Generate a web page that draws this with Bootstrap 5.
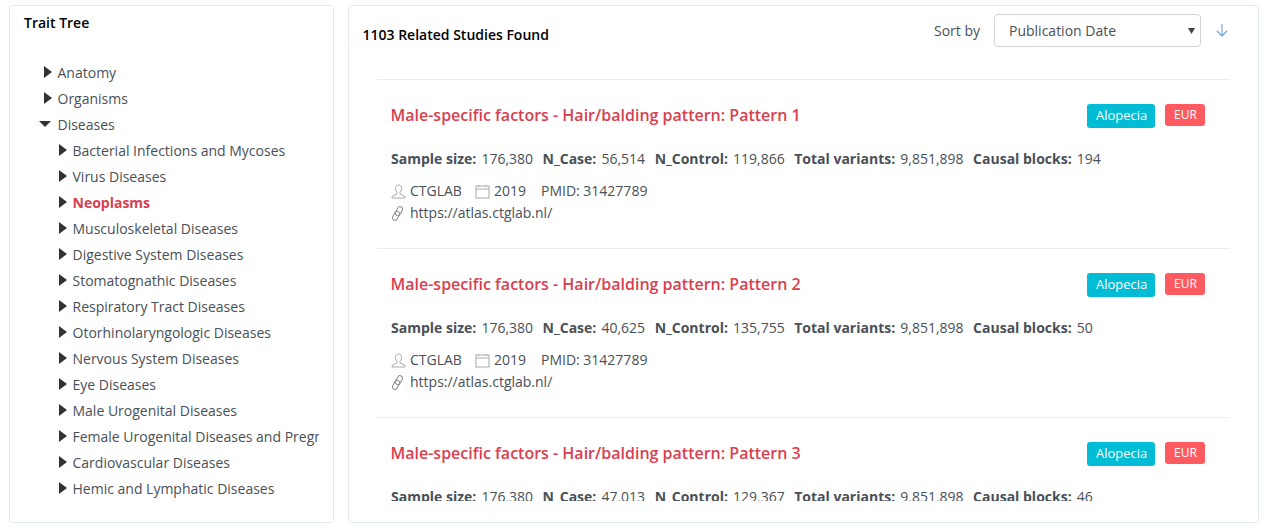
<!DOCTYPE html>
<html lang="en"><head><meta charset="utf-8"><title>Trait Tree</title>
<link rel="stylesheet" href="https://cdn.jsdelivr.net/npm/bootstrap@5.3.0/dist/css/bootstrap.min.css">
<style>
html,body{height:529px;overflow:hidden}
body{font-family:"Open Sans",sans-serif;font-size:14px;color:#495057;background:#fff}
.shell{height:529px;padding:5px 7px 6px 9px;gap:14px}
.panel{border:1px solid #e3ebeb;border-radius:4px;background:#fff;min-width:0}
.side{width:325px;flex:none;padding:7px 14px 0 14px;overflow:hidden}
.side-title{font-size:14px;font-weight:600;color:#000;line-height:19px;margin:0 0 27px}
.tree{list-style:none;margin:0;padding:0 0 0 18.5px;white-space:nowrap;overflow:hidden}
.tree ul{list-style:none;margin:0;padding:0 0 0 15px}
.tree li>span{display:flex;align-items:center;height:26px;gap:5px}
.tw{width:10px;flex:none;display:block;color:#333}
.tw-open{width:12px;margin-left:-4px;margin-right:2px}
.hot{color:#d9404f;font-weight:700}
.main{flex:1;overflow:hidden;padding:0 28px 0 28px;display:flex;flex-direction:column}
.head{height:73px;flex:none;margin-left:-14px;padding-top:8px}
.found{font-size:14px;font-weight:600;color:#000;margin:0;padding-top:10px;margin-left:-.5px}
.sortl{margin-right:14px}
.sorter{width:207px;height:33px;font-size:14px;padding:0 14px;color:#495057;border-color:#ced4da;border-radius:4px;font-family:inherit;background-image:url("data:image/svg+xml,%3Csvg xmlns='http://www.w3.org/2000/svg' width='8' height='6'%3E%3Cpath d='M0 0H8L4 6Z' fill='%23444'/%3E%3C/svg%3E");background-size:7px 6px;background-position:right 5px center;background-repeat:no-repeat}
.arrow{margin-left:14px;margin-right:1px;margin-top:-2px}
.results{height:422px;overflow:hidden;flex:none}
.item{border-top:1px solid #e9eded;height:169px;padding:24px 14px 0 14px}
.title{font-size:16px;font-weight:600;color:#d9404f;margin:0;line-height:22px;margin-left:-.5px}
.tag{color:#fff;border-radius:3px;font-weight:400}
.tag-a{background:#00bcd4;height:24px;padding:3px 9px;font-size:13px;line-height:16px;width:68px;text-align:center}
.tag-b{background:#ff5a5f;height:22px;padding:3px 9px;font-size:12px;line-height:16px;width:40px;text-align:center}
.tags{gap:10px;padding-right:11px;align-items:flex-start}
.stats{margin-top:21px;line-height:20px;gap:9.5px}
.stats b{font-weight:700;margin-right:1.5px}
.meta{margin-top:11px;line-height:22px}
.meta svg{flex:none;margin-right:4px}
.ic-cal{margin-left:5px}
.ic-gap{margin-right:15px}
</style></head><body>
<div class="shell d-flex">
<aside class="panel side">
<p class="side-title">Trait Tree</p>
<ul class="tree">
<li><span><svg class="tw" viewBox="0 0 10 12" width="10" height="12"><path d="M1 0L9 6L1 12Z" fill="currentColor"/></svg>Anatomy</span></li>
<li><span><svg class="tw" viewBox="0 0 10 12" width="10" height="12"><path d="M1 0L9 6L1 12Z" fill="currentColor"/></svg>Organisms</span></li>
<li><span><svg class="tw tw-open" viewBox="0 0 12 10" width="12" height="10"><path d="M0 2H12L6 8Z" fill="currentColor"/></svg>Diseases</span>
<ul>
<li><span><svg class="tw" viewBox="0 0 10 12" width="10" height="12"><path d="M1 0L9 6L1 12Z" fill="currentColor"/></svg>Bacterial Infections and Mycoses</span></li>
<li><span><svg class="tw" viewBox="0 0 10 12" width="10" height="12"><path d="M1 0L9 6L1 12Z" fill="currentColor"/></svg>Virus Diseases</span></li>
<li><span><svg class="tw" viewBox="0 0 10 12" width="10" height="12"><path d="M1 0L9 6L1 12Z" fill="currentColor"/></svg><span class="hot">Neoplasms</span></span></li>
<li><span><svg class="tw" viewBox="0 0 10 12" width="10" height="12"><path d="M1 0L9 6L1 12Z" fill="currentColor"/></svg>Musculoskeletal Diseases</span></li>
<li><span><svg class="tw" viewBox="0 0 10 12" width="10" height="12"><path d="M1 0L9 6L1 12Z" fill="currentColor"/></svg>Digestive System Diseases</span></li>
<li><span><svg class="tw" viewBox="0 0 10 12" width="10" height="12"><path d="M1 0L9 6L1 12Z" fill="currentColor"/></svg>Stomatognathic Diseases</span></li>
<li><span><svg class="tw" viewBox="0 0 10 12" width="10" height="12"><path d="M1 0L9 6L1 12Z" fill="currentColor"/></svg>Respiratory Tract Diseases</span></li>
<li><span><svg class="tw" viewBox="0 0 10 12" width="10" height="12"><path d="M1 0L9 6L1 12Z" fill="currentColor"/></svg>Otorhinolaryngologic Diseases</span></li>
<li><span><svg class="tw" viewBox="0 0 10 12" width="10" height="12"><path d="M1 0L9 6L1 12Z" fill="currentColor"/></svg>Nervous System Diseases</span></li>
<li><span><svg class="tw" viewBox="0 0 10 12" width="10" height="12"><path d="M1 0L9 6L1 12Z" fill="currentColor"/></svg>Eye Diseases</span></li>
<li><span><svg class="tw" viewBox="0 0 10 12" width="10" height="12"><path d="M1 0L9 6L1 12Z" fill="currentColor"/></svg>Male Urogenital Diseases</span></li>
<li><span><svg class="tw" viewBox="0 0 10 12" width="10" height="12"><path d="M1 0L9 6L1 12Z" fill="currentColor"/></svg>Female Urogenital Diseases and Pregnancy Complications</span></li>
<li><span><svg class="tw" viewBox="0 0 10 12" width="10" height="12"><path d="M1 0L9 6L1 12Z" fill="currentColor"/></svg>Cardiovascular Diseases</span></li>
<li><span><svg class="tw" viewBox="0 0 10 12" width="10" height="12"><path d="M1 0L9 6L1 12Z" fill="currentColor"/></svg>Hemic and Lymphatic Diseases</span></li>
</ul></li>
</ul>
</aside>
<main class="panel main">
<div class="head d-flex justify-content-between align-items-start">
<p class="found">1103 Related Studies Found</p>
<div class="d-flex align-items-center">
<span class="sortl">Sort by</span>
<select class="form-select sorter" aria-label="Sort by"><option>Publication Date</option></select>
<svg class="arrow" width="14" height="14" viewBox="0 0 14 14" fill="none" stroke="#6a9fdc" stroke-width="1.1"><path d="M7 1V13M2 8L7 13L12 8"/></svg>
</div>
</div>
<div class="results">
<article class="item">
<div class="d-flex justify-content-between"><h2 class="title">Male-specific factors - Hair/balding pattern: Pattern 1</h2><div class="d-flex tags"><span class="tag tag-a">Alopecia</span><span class="tag tag-b">EUR</span></div></div>
<div class="d-flex stats"><span><b>Sample size:</b> 176,380</span><span><b>N_Case:</b> 56,514</span><span><b>N_Control:</b> 119,866</span><span><b>Total variants:</b> 9,851,898</span><span><b>Causal blocks:</b> 194</span></div>
<div class="meta"><div class="d-flex align-items-center"><svg width="15" height="15" viewBox="0 0 15 15" fill="none" stroke="#a9a9a9"><path d="M7.5 1C5.5 1 4.5 2.5 4.5 4.5C4.5 6.5 5.5 8 6 8.5V10L1 12.5V14H14V12.5L9 10V8.5C9.5 8 10.5 6.5 10.5 4.5C10.5 2.5 9.5 1 7.5 1Z"/></svg><span class="me-2">CTGLAB</span><svg class="ic-cal" width="15" height="15" viewBox="0 0 15 15" fill="none" stroke="#a9a9a9"><rect x="1" y="2" width="13" height="12"/><path d="M1 5H14M4 1V3M11 1V3"/></svg><span class="ic-gap">2019</span><span>PMID: 31427789</span></div>
<div class="d-flex align-items-center"><svg width="15" height="15" viewBox="0 0 15 15" fill="none" stroke="#8a8a8a"><g transform="rotate(-62 6.5 7.5)"><rect x="-1" y="4.8" width="9.5" height="5" rx="2.5"/><rect x="4.5" y="5.2" width="9.5" height="5" rx="2.5"/></g></svg><span>https://atlas.ctglab.nl/</span></div></div>
</article>
<article class="item">
<div class="d-flex justify-content-between"><h2 class="title">Male-specific factors - Hair/balding pattern: Pattern 2</h2><div class="d-flex tags"><span class="tag tag-a">Alopecia</span><span class="tag tag-b">EUR</span></div></div>
<div class="d-flex stats"><span><b>Sample size:</b> 176,380</span><span><b>N_Case:</b> 40,625</span><span><b>N_Control:</b> 135,755</span><span><b>Total variants:</b> 9,851,898</span><span><b>Causal blocks:</b> 50</span></div>
<div class="meta"><div class="d-flex align-items-center"><svg width="15" height="15" viewBox="0 0 15 15" fill="none" stroke="#a9a9a9"><path d="M7.5 1C5.5 1 4.5 2.5 4.5 4.5C4.5 6.5 5.5 8 6 8.5V10L1 12.5V14H14V12.5L9 10V8.5C9.5 8 10.5 6.5 10.5 4.5C10.5 2.5 9.5 1 7.5 1Z"/></svg><span class="me-2">CTGLAB</span><svg class="ic-cal" width="15" height="15" viewBox="0 0 15 15" fill="none" stroke="#a9a9a9"><rect x="1" y="2" width="13" height="12"/><path d="M1 5H14M4 1V3M11 1V3"/></svg><span class="ic-gap">2019</span><span>PMID: 31427789</span></div>
<div class="d-flex align-items-center"><svg width="15" height="15" viewBox="0 0 15 15" fill="none" stroke="#8a8a8a"><g transform="rotate(-62 6.5 7.5)"><rect x="-1" y="4.8" width="9.5" height="5" rx="2.5"/><rect x="4.5" y="5.2" width="9.5" height="5" rx="2.5"/></g></svg><span>https://atlas.ctglab.nl/</span></div></div>
</article>
<article class="item">
<div class="d-flex justify-content-between"><h2 class="title">Male-specific factors - Hair/balding pattern: Pattern 3</h2><div class="d-flex tags"><span class="tag tag-a">Alopecia</span><span class="tag tag-b">EUR</span></div></div>
<div class="d-flex stats"><span><b>Sample size:</b> 176,380</span><span><b>N_Case:</b> 47,013</span><span><b>N_Control:</b> 129,367</span><span><b>Total variants:</b> 9,851,898</span><span><b>Causal blocks:</b> 46</span></div>
</article>
</div>
</main>
</div>
</body></html>
